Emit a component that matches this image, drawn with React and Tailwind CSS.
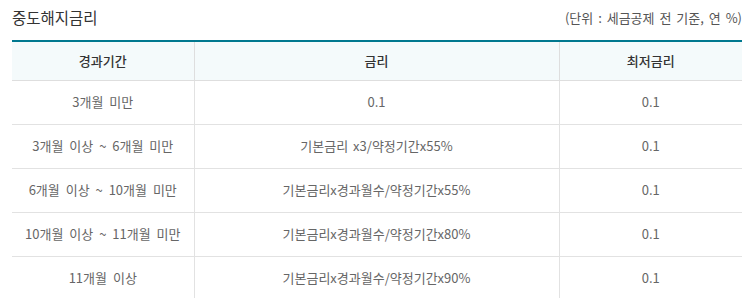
const rows = [
  ['3개월 미만', '0.1', '0.1'],
  ['3개월 이상 ~ 6개월 미만', '기본금리 x3/약정기간x55%', '0.1'],
  ['6개월 이상 ~ 10개월 미만', '기본금리x경과월수/약정기간x55%', '0.1'],
  ['10개월 이상 ~ 11개월 미만', '기본금리x경과월수/약정기간x80%', '0.1'],
  ['11개월 이상', '기본금리x경과월수/약정기간x90%', '0.1'],
];

export default function App() {
  return (
    <div className="bg-white w-[753px] h-[298px] overflow-hidden pl-3 pr-[11px] font-['Noto_Sans_CJK_KR',sans-serif]">
      <div className="flex items-end justify-between h-[30px]">
        <h2 className="text-[15.5px] leading-[20px] text-[#333] pb-[3px]">중도해지금리</h2>
        <span className="text-[13px] leading-[18px] text-[#555] pb-[3px] [word-spacing:2px]">(단위 : 세금공제 전 기준, 연 %)</span>
      </div>
      <table className="w-full mt-[10px] border-t-2 border-[#00788f] border-collapse table-fixed text-[13px]">
        <colgroup>
          <col className="w-[182px]" />
          <col className="w-[365px]" />
          <col />
        </colgroup>
        <thead>
          <tr className="bg-[#f4fafb] h-[39px] border-b border-[#dedede]">
            <th className="font-medium text-[#333] border-r border-[#dedede]">경과기간</th>
            <th className="font-medium text-[#333] border-r border-[#dedede]">금리</th>
            <th className="font-medium text-[#333]">최저금리</th>
          </tr>
        </thead>
        <tbody>
          {rows.map((r, i) => (
            <tr key={i} className="h-[44px] border-b border-[#e2e2e2]">
              <td className="text-center text-[#666] border-r border-[#e2e2e2] [word-spacing:3px]">{r[0]}</td>
              <td className="text-center text-[#666] border-r border-[#e2e2e2] [word-spacing:2px]">{r[1]}</td>
              <td className="text-center text-[#666]">{r[2]}</td>
            </tr>
          ))}
        </tbody>
      </table>
    </div>
  );
}
